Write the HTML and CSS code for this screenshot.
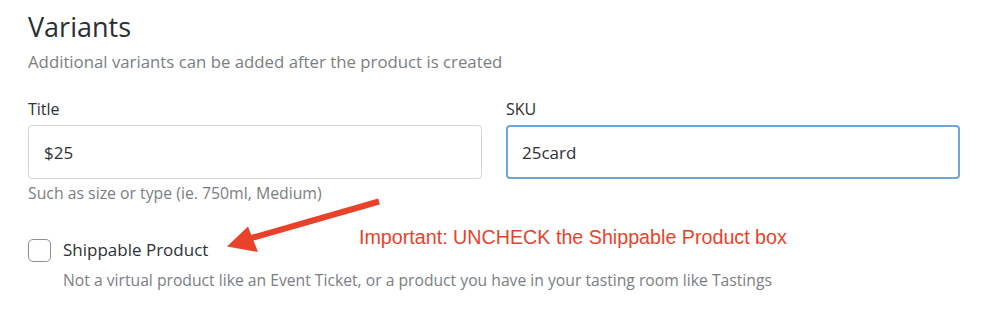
FILE: index.html
```html
<!DOCTYPE html>
<html>
<head>
<meta charset="utf-8">
<link rel="stylesheet" href="styles.css">
</head>
<body>
<section class="variants">
  <h2 class="title">Variants</h2>
  <p class="subtitle">Additional variants can be added after the product is created</p>
  <div class="fields">
    <div class="field">
      <label class="label">Title</label>
      <div class="input">$25</div>
      <p class="help">Such as size or type (ie. 750ml, Medium)</p>
    </div>
    <div class="field">
      <label class="label">SKU</label>
      <div class="input focused">25card</div>
    </div>
  </div>
  <div class="check-row">
    <span class="checkbox"></span>
    <div class="check-text">
      <div class="check-label">Shippable Product</div>
      <p class="check-help">Not a virtual product like an Event Ticket, or a product you have in your tasting room like Tastings</p>
    </div>
  </div>
  <svg class="arrow" width="983" height="310" viewBox="0 0 983 310">
    <line x1="379" y1="201.5" x2="248" y2="239" stroke="#e8432a" stroke-width="6" stroke-linecap="butt"/>
    <polygon points="227,246.5 248,226.5 258,252" fill="#e8432a"/>
  </svg>
  <div class="note">Important: UNCHECK the Shippable Product box</div>
</section>
</body>
</html>
```

FILE: styles.css
```css
html, body {
  margin: 0;
  padding: 0;
  background: #fff;
}
body {
  font-family: "Open Sans", "Noto Sans", sans-serif;
  color: #2b2f33;
}
.variants {
  position: relative;
  padding: 10px 23px 0 28px;
  height: 300px;
}
.title {
  margin: 0;
  font-size: 27px;
  font-weight: 400;
  line-height: 34px;
  color: #2a2e33;
}
.subtitle {
  margin: 7px 0 0;
  font-size: 16.8px;
  line-height: 22px;
  color: #7b7e83;
}
.fields {
  display: grid;
  grid-template-columns: 1fr 1fr;
  column-gap: 24px;
  margin-top: 25px;
}
.label {
  display: block;
  font-size: 16px;
  line-height: 22px;
  color: #2d3136;
  margin-bottom: 5px;
}
.input {
  box-sizing: border-box;
  height: 54px;
  border: 1px solid #d2d4d7;
  border-radius: 4px;
  padding: 0 15px;
  display: flex;
  align-items: center;
  font-size: 17px;
  color: #2d3136;
}
.input.focused {
  border: 2px solid #6fa6d8;
  padding-left: 14px;
}
.help {
  margin: 3px 0 0;
  font-size: 15.8px;
  line-height: 22px;
  color: #7b7e83;
}
.check-row {
  display: flex;
  gap: 12px;
  margin-top: 35px;
}
.checkbox {
  box-sizing: border-box;
  flex: none;
  width: 23px;
  height: 23px;
  border: 1px solid #8d9095;
  border-radius: 5px;
}
.check-label {
  font-size: 17px;
  line-height: 22px;
  color: #2d3136;
}
.check-help {
  margin: 8px 0 0;
  font-size: 15.7px;
  line-height: 22px;
  color: #7b7e83;
}
.arrow {
  position: absolute;
  left: 0;
  top: 0;
  pointer-events: none;
}
.note {
  position: absolute;
  left: 359px;
  top: 224.5px;
  font-family: "Liberation Sans", Arial, sans-serif;
  font-size: 19.7px;
  line-height: 24px;
  color: #e8432a;
  white-space: nowrap;
}
```
